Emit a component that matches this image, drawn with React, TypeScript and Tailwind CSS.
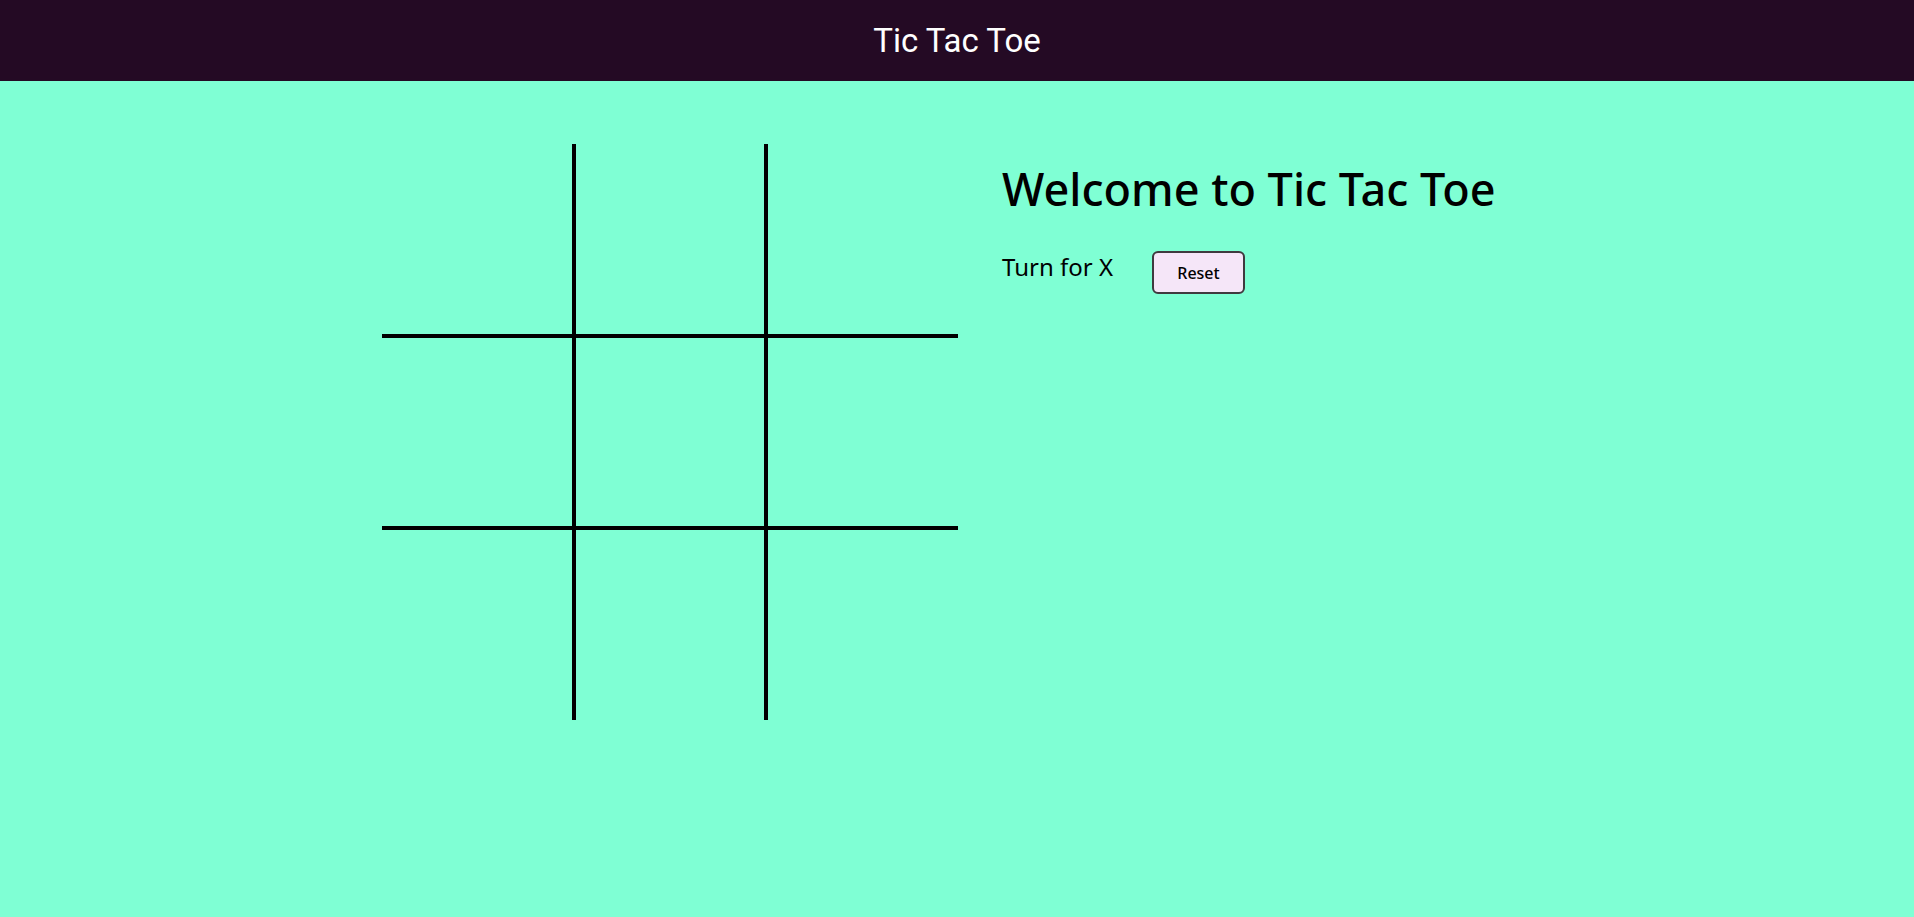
import React, { useState } from "react";

export default function App() {
  const [cells, setCells] = useState<(string | null)[]>(Array(9).fill(null));
  const [turn, setTurn] = useState<"X" | "O">("X");

  const border = (i: number) => {
    const r = Math.floor(i / 3);
    const c = i % 3;
    const cls: string[] = [];
    if (c === 0) cls.push("border-r-2");
    if (c === 1) cls.push("border-x-2");
    if (c === 2) cls.push("border-l-2");
    if (r === 0) cls.push("border-b-2");
    if (r === 1) cls.push("border-y-2");
    if (r === 2) cls.push("border-t-2");
    return cls.join(" ");
  };

  const play = (i: number) => {
    if (cells[i]) return;
    const n = [...cells];
    n[i] = turn;
    setCells(n);
    setTurn(turn === "X" ? "O" : "X");
  };

  return (
    <div className="min-h-[917px] w-full bg-[#7fffd4]">
      <header className="h-[81px] bg-[#240a24] flex items-center justify-center">
        <h1 className="text-white text-[33px] leading-none font-['Roboto',sans-serif] font-normal">Tic Tac Toe</h1>
      </header>
      <main className="flex justify-center gap-[44px] pt-[63px]">
        <div className="grid grid-cols-[192px_192px_192px] grid-rows-[192px_192px_192px]">
          {cells.map((v, i) => (
            <button
              key={i}
              onClick={() => play(i)}
              className={`border-black ${border(i)} flex items-center justify-center text-[96px] font-['Noto_Sans',sans-serif] text-black`}
            >
              {v}
            </button>
          ))}
        </div>
        <div className="w-[530px] font-['Noto_Sans',sans-serif] text-black">
          <h2 className="text-[45px] font-medium leading-none mt-[22px]">Welcome to Tic Tac Toe</h2>
          <div className="flex items-start mt-[40px]">
            <span className="text-[24px] leading-none w-[150px] mt-[4px]">Turn for {turn}</span>
            <button
              onClick={() => { setCells(Array(9).fill(null)); setTurn("X"); }}
              className="w-[93px] h-[43px] rounded-[6px] border-2 border-[#3f3a3f] bg-[#f5e6f8] text-[16px] font-medium text-black"
            >
              Reset
            </button>
          </div>
        </div>
      </main>
    </div>
  );
}
